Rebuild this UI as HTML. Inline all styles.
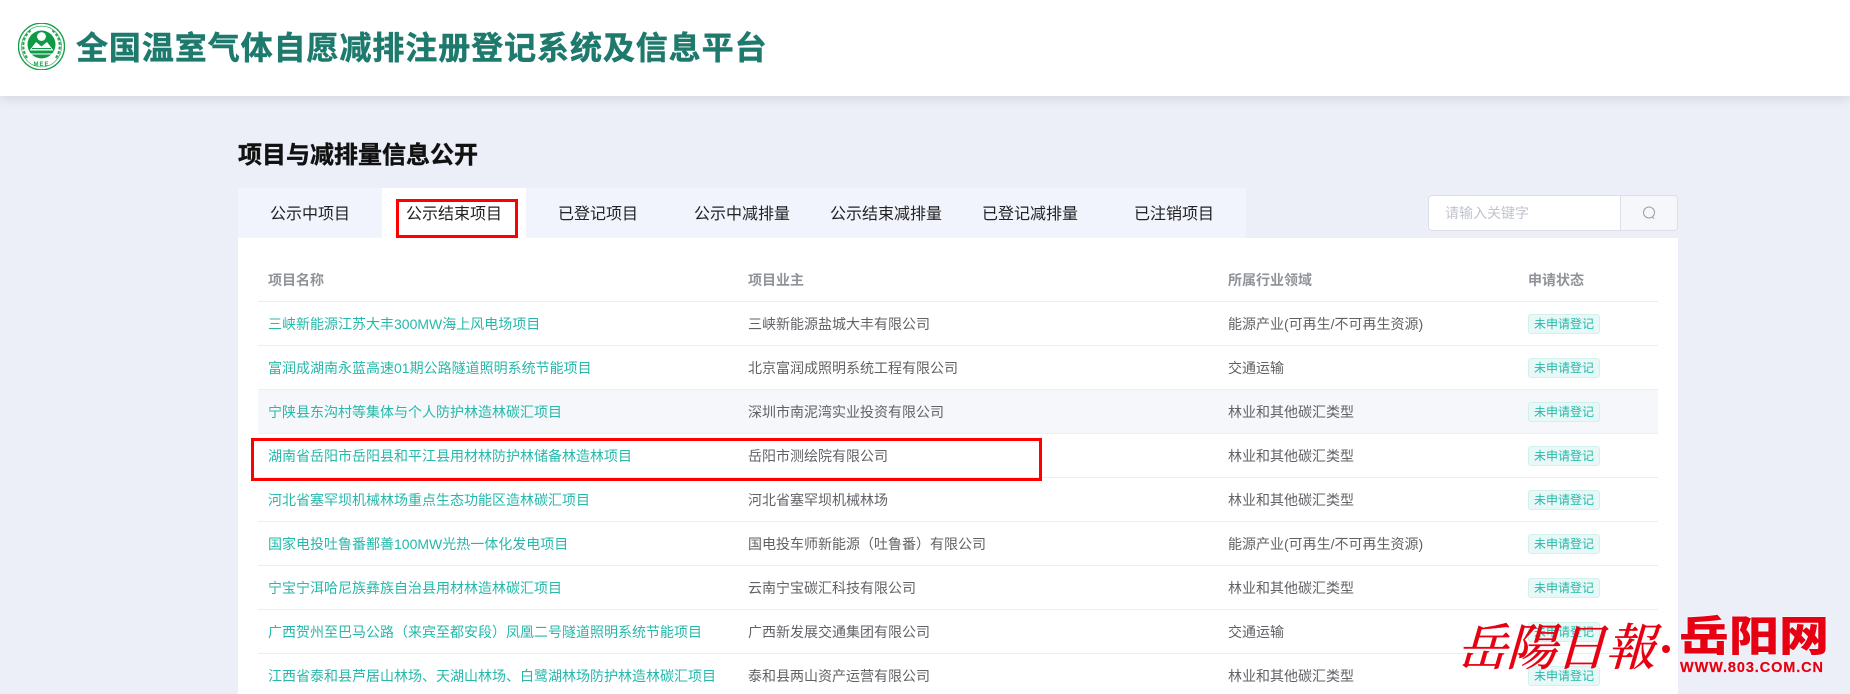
<!DOCTYPE html>
<html lang="zh-CN">
<head>
<meta charset="utf-8">
<title>全国温室气体自愿减排注册登记系统及信息平台</title>
<style>
*{box-sizing:border-box;margin:0;padding:0}
html,body{width:1850px;height:694px;overflow:hidden;background:#eceff8}
body{position:relative;font-family:"Liberation Sans","Noto Sans CJK SC",sans-serif;font-size:14px;color:#606266}
.abs{position:absolute;white-space:nowrap}
#hd{position:absolute;left:0;top:0;width:1850px;height:96px;background:#fff;box-shadow:0 2px 12px rgba(0,0,0,.12)}
#ttl{left:76px;top:25px;font-size:32px;line-height:46px;font-weight:700;letter-spacing:.93px;color:#1d7a6c;-webkit-text-stroke:.5px #1d7a6c}
#sec{left:238px;top:138px;font-size:24px;line-height:36px;font-weight:700;color:#111;-webkit-text-stroke:.4px #111}
#tabs{position:absolute;left:238px;top:188px;width:1008px;height:50px;background:#f1f4fd}
.tab{position:absolute;top:2px;width:144px;height:48px;line-height:50px;text-align:center;font-size:16px;color:#222}
.tab.on{background:#fff;top:0;height:50px;line-height:54px}
#panel{position:absolute;left:238px;top:238px;width:1440px;height:456px;background:#fff}
#search{position:absolute;left:1428px;top:195px;width:250px;height:36px;background:#fff;border:1px solid #dcdfe6;border-radius:4px;overflow:hidden}
#search span{position:absolute;left:16px;top:0;line-height:34px;color:#c0c4cc;font-size:14px}
#search i{position:absolute;left:191px;top:0;width:58px;height:34px;background:#f5f7fa;border-left:1px solid #dcdfe6}
#search svg{position:absolute;left:21px;top:10px}
.row{position:absolute;left:258px;width:1400px;height:44px;border-bottom:1px solid #ebeef5}
.row span{position:absolute;top:0;line-height:45px;white-space:nowrap}
.c1{left:10px}.c2{left:490px}.c3{left:970px}.c4{left:1270px}
.row .c1{color:#26b8aa}
.hdr span{font-weight:700;color:#909399}
.row .tag{top:12px;height:20px;width:72px;line-height:18px;text-align:center;font-size:12px;color:#26b8aa;background:#e8f8f6;border:1px solid #d2f1ed;border-radius:3px}
.hov{background:#f5f7fa}
.red{position:absolute;border:3px solid #f00;background:transparent}
#wm1{left:1452px;top:607px;font-family:"Noto Serif CJK SC",serif;font-weight:500;font-size:50px;line-height:74px;letter-spacing:-.5px;color:#e60012;transform:skewX(-16deg);transform-origin:left bottom;-webkit-text-stroke:.3px #e60012}
#wmd{left:1662px;top:645px;width:8px;height:8px;border-radius:50%;background:#e60012}
#wm2{left:1679px;top:604px;font-family:"Noto Sans CJK SC",sans-serif;font-weight:900;font-size:50px;line-height:70px;color:#e60012;transform:scaleY(.84);transform-origin:left top;text-shadow:0 0 2px #fff,0 0 2px #fff}
#wm3{left:1680px;top:659px;font-family:"Liberation Sans",sans-serif;font-weight:700;font-size:14.5px;line-height:18px;letter-spacing:.9px;color:#e60012;-webkit-text-stroke:.2px #e60012;text-shadow:0 0 2px #fff}
</style>
</head>
<body>
<div id="hd"></div>
<svg class="abs" style="left:18px;top:23px" width="47" height="47" viewBox="0 0 47 47">
  <ellipse cx="23.5" cy="23.5" rx="23" ry="23.3" fill="#fff" stroke="#14a04a" stroke-width="1.4"/>
  <ellipse cx="23.5" cy="23.5" rx="20" ry="20.4" fill="none" stroke="#14a04a" stroke-width=".6"/>
  <g fill="none" stroke="#2aa955" stroke-width="2.2" stroke-dasharray="3 1.6">
    <path d="M9 35C3 26 4 14 13 7"/>
    <path d="M38 35C44 26 43 14 34 7"/>
  </g>
  <circle cx="23.5" cy="21.5" r="14" fill="#0f9a46"/>
  <circle cx="23.5" cy="13.5" r="4.4" fill="#fff"/>
  <path d="M11.5 27.5 L18 19 L23.5 23.5 L29 19 L35.5 27.5Z" fill="#fff"/>
  <path d="M14 25.5h19M14 29h19" stroke="#0f9a46" stroke-width="1"/>
  <path d="M12.5 31h22" stroke="#fff" stroke-width="1"/>
  <text x="23.5" y="43" text-anchor="middle" font-family="Liberation Sans,sans-serif" font-weight="700" font-size="6" letter-spacing="1" fill="#14a04a">MEE</text>
</svg>
<div id="ttl" class="abs">全国温室气体自愿减排注册登记系统及信息平台</div>

<div id="sec" class="abs">项目与减排量信息公开</div>

<div id="tabs">
  <div class="tab" style="left:0">公示中项目</div>
  <div class="tab on" style="left:144px">公示结束项目</div>
  <div class="tab" style="left:288px">已登记项目</div>
  <div class="tab" style="left:432px">公示中减排量</div>
  <div class="tab" style="left:576px">公示结束减排量</div>
  <div class="tab" style="left:720px">已登记减排量</div>
  <div class="tab" style="left:864px">已注销项目</div>
</div>

<div id="search"><span>请输入关键字</span><i><svg width="14" height="14" viewBox="0 0 14 14" fill="none" stroke="#9a9da3" stroke-width="1"><circle cx="7" cy="6.5" r="5.5"/><path d="M10.5 11l1.6 2"/></svg></i></div>

<div id="panel"></div>

<div class="row hdr" style="top:258px"><span class="c1" style="color:#909399">项目名称</span><span class="c2">项目业主</span><span class="c3">所属行业领域</span><span class="c4">申请状态</span></div>

<div class="row" style="top:302px"><span class="c1">三峡新能源江苏大丰300MW海上风电场项目</span><span class="c2">三峡新能源盐城大丰有限公司</span><span class="c3">能源产业(可再生/不可再生资源)</span><span class="c4 tag">未申请登记</span></div>
<div class="row" style="top:346px"><span class="c1">富润成湖南永蓝高速01期公路隧道照明系统节能项目</span><span class="c2">北京富润成照明系统工程有限公司</span><span class="c3">交通运输</span><span class="c4 tag">未申请登记</span></div>
<div class="row hov" style="top:390px"><span class="c1">宁陕县东沟村等集体与个人防护林造林碳汇项目</span><span class="c2">深圳市南泥湾实业投资有限公司</span><span class="c3">林业和其他碳汇类型</span><span class="c4 tag">未申请登记</span></div>
<div class="row" style="top:434px"><span class="c1">湖南省岳阳市岳阳县和平江县用材林防护林储备林造林项目</span><span class="c2">岳阳市测绘院有限公司</span><span class="c3">林业和其他碳汇类型</span><span class="c4 tag">未申请登记</span></div>
<div class="row" style="top:478px"><span class="c1">河北省塞罕坝机械林场重点生态功能区造林碳汇项目</span><span class="c2">河北省塞罕坝机械林场</span><span class="c3">林业和其他碳汇类型</span><span class="c4 tag">未申请登记</span></div>
<div class="row" style="top:522px"><span class="c1">国家电投吐鲁番鄯善100MW光热一体化发电项目</span><span class="c2">国电投车师新能源（吐鲁番）有限公司</span><span class="c3">能源产业(可再生/不可再生资源)</span><span class="c4 tag">未申请登记</span></div>
<div class="row" style="top:566px"><span class="c1">宁宝宁洱哈尼族彝族自治县用材林造林碳汇项目</span><span class="c2">云南宁宝碳汇科技有限公司</span><span class="c3">林业和其他碳汇类型</span><span class="c4 tag">未申请登记</span></div>
<div class="row" style="top:610px"><span class="c1">广西贺州至巴马公路（来宾至都安段）凤凰二号隧道照明系统节能项目</span><span class="c2">广西新发展交通集团有限公司</span><span class="c3">交通运输</span><span class="c4 tag">未申请登记</span></div>
<div class="row" style="top:654px"><span class="c1">江西省泰和县芦居山林场、天湖山林场、白鹭湖林场防护林造林碳汇项目</span><span class="c2">泰和县两山资产运营有限公司</span><span class="c3">林业和其他碳汇类型</span><span class="c4 tag">未申请登记</span></div>

<div class="red" style="left:396px;top:199px;width:122px;height:39px"></div>
<div class="red" style="left:251px;top:438px;width:791px;height:43px"></div>

<div id="wm1" class="abs">岳陽日報</div>
<div id="wmd" class="abs"></div>
<div id="wm2" class="abs">岳阳网</div>
<div id="wm3" class="abs">WWW.803.COM.CN</div>
</body>
</html>
